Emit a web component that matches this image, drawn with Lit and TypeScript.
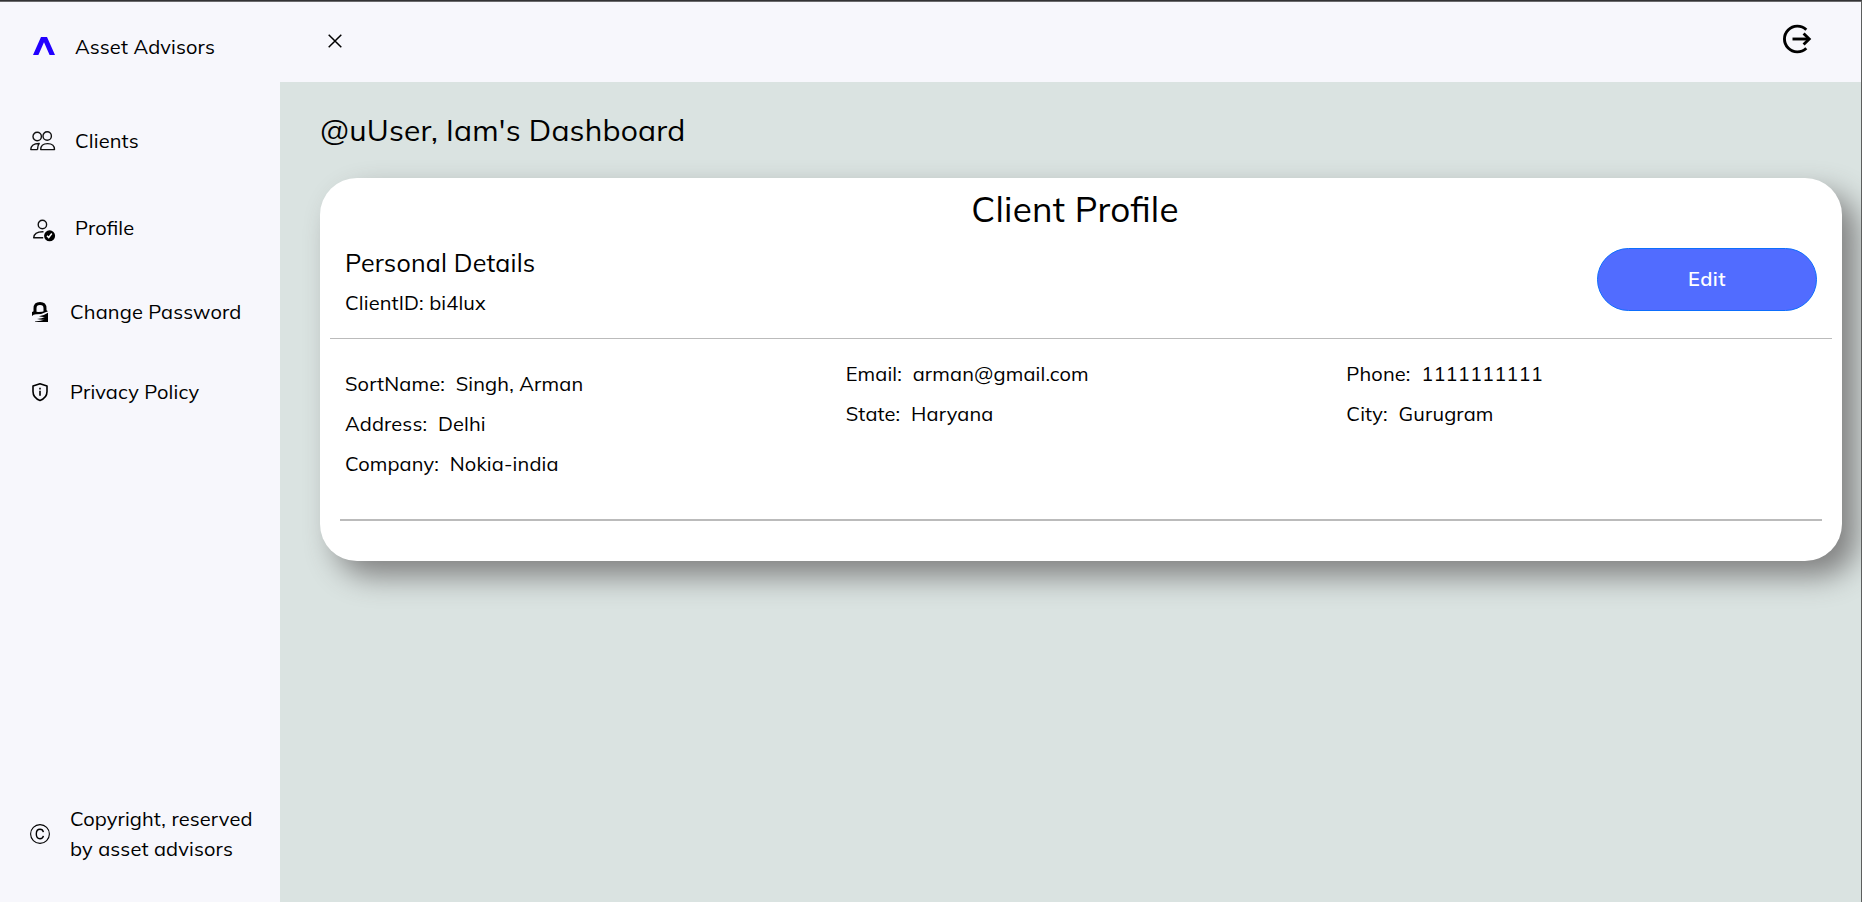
import { LitElement, html, css, svg, TemplateResult } from "lit";
import { customElement } from "lit/decorators.js";

interface Field { label: string; value: string }
interface NavItem { text: string; icon: TemplateResult; cls: string }

const logo = html`<svg width="26" height="20" viewBox="0 0 26 20"><path d="M3 19 11 1h6l8 18h-5.400L14 6.200 8.400 19z" fill="#2200ff"/></svg>`;

const clients = html`<svg width="26" height="20" viewBox="0 0 26 20" fill="none" stroke="#111" stroke-width="1.400">
  ${svg`<circle cx="17.200" cy="5" r="4.200"/><circle cx="7.200" cy="5.500" r="4.200"/>
  <path d="M10.700 18.600c0-4 3-6 6.900-6s6.900 2 6.900 6z" stroke-linejoin="round"/>
  <path d="M7.500 18.600H.800c0-3.600 2.300-6.100 8.400-6.100C7.600 14.100 7.600 16.500 7.500 18.600" stroke-linejoin="round"/>`}</svg>`;

const profile = html`<svg width="26" height="24" viewBox="0 0 26 24" fill="none" stroke="#111" stroke-width="1.400">
  ${svg`<circle cx="12.400" cy="5.500" r="4.200"/>
  <path d="M13.500 12.700C7 12.500 4 15 3.700 18.700h9.500" stroke-linejoin="round"/>
  <circle cx="19.600" cy="16.800" r="5.500" fill="#000" stroke="none"/>
  <path d="M17 16.800l1.700 1.700 3.100-4" stroke="#fff" stroke-width="1.500"/>`}</svg>`;

const lock = html`<svg width="20" height="22" viewBox="0 0 20 22">
  ${svg`<path d="M5 12V7.500C5 3.300 7 2.600 10 2.600s5 .700 5 4.900V10.500" fill="none" stroke="#000" stroke-width="3"/>
  <path d="M2 11 4 10.300Q9 12.300 16.500 9.200L18 10.200Q12 13.400 6 13.200 3.300 13.500 2 15z" fill="#000"/>
  <path d="M9 15.300q5-.700 9-3.500V21H5v-.600q6-.300 10-2-3 .600-8-.400 5-.200 8.500-2.200-2.500.500-6.500-.500z" fill="#000"/>`}</svg>`;

const shield = html`<svg width="20" height="20" viewBox="0 0 20 20">
  ${svg`<path d="M10 1.700 17 4v5.500c0 4.500-3 7.500-7 8.900-4-1.400-7-4.400-7-8.900V4z" fill="none" stroke="#000" stroke-width="1.600" stroke-linejoin="round"/>
  <path d="M10 5.700v1.700M10 8.800v5" stroke="#000" stroke-width="1.600"/>`}</svg>`;

const copyright = html`<svg width="20" height="20" viewBox="0 0 20 20" fill="none" stroke="#000">
  ${svg`<circle cx="10" cy="10" r="9.400" stroke-width="1.100"/>
  <path d="M13.400 8.200C13 6.300 11.800 5.300 10 5.300c-2.200 0-3.700 1.800-3.700 4.700s1.500 4.700 3.700 4.700c1.800 0 3-1 3.400-2.900" stroke-width="1.400"/>`}</svg>`;

const close = html`<svg width="16" height="16" viewBox="0 0 16 16"><path d="M1.700 1.700 14.300 14.300M14.300 1.700 1.700 14.300" stroke="#000" stroke-width="1.500"/></svg>`;

const logout = html`<svg width="30" height="30" viewBox="0 0 30 30" fill="none" stroke="#000" stroke-width="2.900">
  ${svg`<path d="M24.300 5.700A12.900 12.900 0 1 0 24.300 24.300"/><path d="M10.500 15H27"/><path d="M21.600 9.500 27.200 15l-5.600 5.500"/>`}</svg>`;

const NAV: NavItem[] = [
  { text: "Asset Advisors", icon: logo, cls: "brand wide" },
  { text: "Clients", icon: clients, cls: "clients wide" },
  { text: "Profile", icon: profile, cls: "profile wide" },
  { text: "Change Password", icon: lock, cls: "password" },
  { text: "Privacy Policy", icon: shield, cls: "privacy" },
];

const COLUMNS: Field[][] = [
  [
    { label: "SortName:", value: "Singh, Arman" },
    { label: "Address:", value: "Delhi" },
    { label: "Company:", value: "Nokia-india" },
  ],
  [
    { label: "Email:", value: "arman@gmail.com" },
    { label: "State:", value: "Haryana" },
  ],
  [
    { label: "Phone:", value: "1111111111" },
    { label: "City:", value: "Gurugram" },
  ],
];

@customElement("app-root")
class AppRoot extends LitElement {
  static styles = css`
    :host { display: block; font: 20px/30px Mulish, Muli, "Open Sans", sans-serif; color: #000; letter-spacing: 0.15px; font-feature-settings: "liga" 1; }
    * { box-sizing: border-box; }
    svg { display: block; flex: none; }
    .shell { height: 902px; display: flex; overflow: hidden; background: #dae3e1; border-top: 1px solid #333335; border-right: 1px solid #5c5e5e; }
    .side { width: 280px; flex: none; display: flex; flex-direction: column; background: #f7f7fc; border-top: 1px solid #6a6a6c; padding: 30px 0 38px 30px; }
    .item { display: flex; align-items: center; gap: 20px; height: 30px; white-space: nowrap; }
    .wide { gap: 19px; }
    .brand svg { margin-bottom: 2px; }
    .clients { margin-top: 64px; }
    .clients svg { margin-bottom: 1px; }
    .profile { margin-top: 57px; }
    .profile svg { margin-top: 5px; }
    .password { margin-top: 54px; }
    .privacy { margin-top: 50px; }
    .legal { height: 60px; margin-top: auto; }
    .line { display: block; }
    .main { flex: 1; min-width: 0; display: flex; flex-direction: column; }
    .bar { height: 81px; flex: none; display: flex; justify-content: space-between; align-items: flex-start; background: #f7f7fc; border-top: 1px solid #6a6a6c; padding: 22px 49px 0 47px; }
    .bar .x { margin-top: 9px; }
    .content { padding: 28px 19px 0 40px; }
    h1, h2, h3 { margin: 0; font-weight: 400; }
    h1 { font-size: 30px; line-height: 40px; letter-spacing: 0.21px; }
    .card { margin-top: 28px; height: 383px; background: #fff; border-radius: 37px; box-shadow: 15px 15px 30px gray; padding: 10px 10px 0; }
    h2 { font-size: 35px; line-height: 42px; text-align: center; padding-right: 12px; letter-spacing: 0.3px; }
    .head { display: flex; justify-content: space-between; margin-top: 12px; height: 97px; padding: 0 15px; border-bottom: 1px solid #bbb; line-height: 40px; }
    .head div { padding-top: 1px; }
    .head div div { padding: 0; }
    h3 { font-size: 25px; letter-spacing: 0.19px; }
    .edit { margin-top: 6px; width: 220px; height: 63px; border: 1px solid #0d6efd; border-radius: 32px; background: #516cff; color: #fff; font: 600 20px/30px Mulish, Muli, "Open Sans", sans-serif; padding: 0 0 2px; letter-spacing: 0.5px; }
    .cols { display: grid; grid-template-columns: repeat(3, 1fr); padding-top: 15px; line-height: 40px; }
    .col { padding-left: 15px; white-space: pre; }
    .col:first-child { padding-top: 10px; }
    .rule { height: 2px; margin: 35px 10px 0; background: #bbb; }
  `;

  render() {
    return html`<div class="shell">
      <nav class="side">
        ${NAV.map((n) => html`<div class="item ${n.cls}">${n.icon}<span>${n.text}</span></div>`)}
        <div class="item legal">${copyright}<span><span class="line">Copyright, reserved</span><span class="line">by asset advisors</span></span></div>
      </nav>
      <div class="main">
        <header class="bar"><div class="x">${close}</div>${logout}</header>
        <div class="content">
          <h1>@uUser, Iam's Dashboard</h1>
          <section class="card">
            <h2>Client Profile</h2>
            <div class="head">
              <div><h3>Personal Details</h3><div>ClientID: bi4lux</div></div>
              <button class="edit">Edit</button>
            </div>
            <div class="cols">${COLUMNS.map((c) => html`<div class="col">${c.map((f) => html`<div>${f.label}  ${f.value}</div>`)}</div>`)}</div>
            <div class="rule"></div>
          </section>
        </div>
      </div>
    </div>`;
  }
}
